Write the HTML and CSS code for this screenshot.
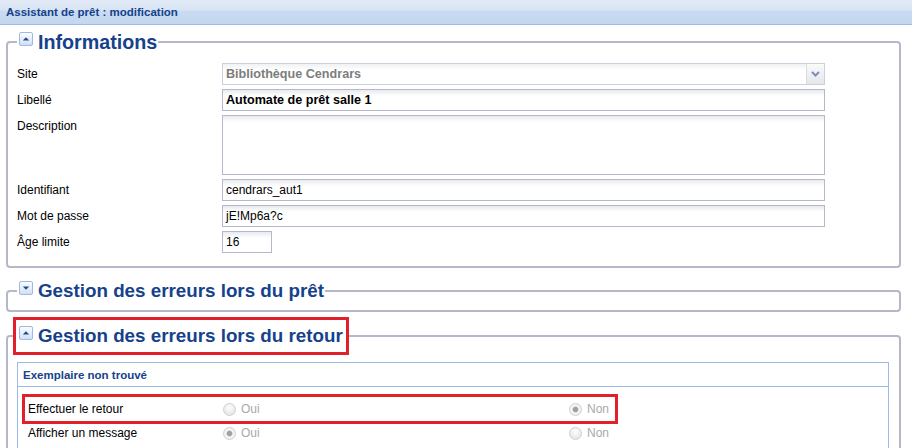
FILE: index.html
```html
<!DOCTYPE html>
<html lang="fr">
<head>
<meta charset="utf-8">
<title>Assistant de prêt : modification</title>
<link rel="stylesheet" href="styles.css">
</head>
<body>
<div class="win-header">Assistant de prêt : modification</div>

<fieldset class="fs fs-info">
  <legend class="fs-legend"><span class="tool"><svg viewBox="0 0 12 12"><path d="M2.8 7.4 6 4.2 9.2 7.4Z"/></svg></span><span class="fs-title">Informations</span></legend>
  <div class="form-row">
    <div class="form-label">Site</div>
    <div class="field combo"><span class="combo-text">Bibliothèque Cendrars</span><span class="combo-trigger"><svg viewBox="0 0 9 6"><polyline points="1,1 4.5,4.5 8,1" fill="none" stroke="#7d8dbd" stroke-width="2"/></svg></span></div>
  </div>
  <div class="form-row">
    <div class="form-label">Libellé</div>
    <div class="field field-bold">Automate de prêt salle 1</div>
  </div>
  <div class="form-row">
    <div class="form-label">Description</div>
    <div class="field field-area"></div>
  </div>
  <div class="form-row">
    <div class="form-label">Identifiant</div>
    <div class="field">cendrars_aut1</div>
  </div>
  <div class="form-row">
    <div class="form-label">Mot de passe</div>
    <div class="field">jE!Mp6a?c</div>
  </div>
  <div class="form-row">
    <div class="form-label">Âge limite</div>
    <div class="field field-short">16</div>
  </div>
</fieldset>

<fieldset class="fs fs-pret">
  <legend class="fs-legend"><span class="tool"><svg viewBox="0 0 12 12"><path d="M2.8 4.6 6 7.8 9.2 4.6Z"/></svg></span><span class="fs-title">Gestion des erreurs lors du prêt</span></legend>
</fieldset>

<fieldset class="fs fs-retour">
  <legend class="fs-legend hl"><span class="tool"><svg viewBox="0 0 12 12"><path d="M2.8 7.4 6 4.2 9.2 7.4Z"/></svg></span><span class="fs-title">Gestion des erreurs lors du retour</span></legend>
  <div class="panel">
    <div class="panel-header">Exemplaire non trouvé</div>
    <div class="panel-body">
      <div class="radio-row hl">
        <div class="radio-label">Effectuer le retour</div>
        <label class="radio-opt opt-first"><input class="radio" type="radio" name="r1" disabled>Oui</label>
        <label class="radio-opt"><input class="radio" type="radio" name="r1" checked disabled>Non</label>
      </div>
      <div class="radio-row">
        <div class="radio-label">Afficher un message</div>
        <label class="radio-opt opt-first"><input class="radio" type="radio" name="r2" checked disabled>Oui</label>
        <label class="radio-opt"><input class="radio" type="radio" name="r2" disabled>Non</label>
      </div>
    </div>
  </div>
</fieldset>
</body>
</html>
```

FILE: styles.css
```css
* { box-sizing: border-box; }

html, body { margin: 0; padding: 0; }

body {
  width: 912px;
  height: 448px;
  overflow: hidden;
  background: #fff;
  font-family: "Liberation Sans", Arial, sans-serif;
  font-size: 12px;
  color: #000;
}

.win-header {
  height: 25px;
  padding: 1px 0 0 6px;
  border-bottom: 1px solid #99bbe8;
  background: linear-gradient(#e2eaf6 0%, #d9e5f4 42%, #c9dbf1 46%, #c3d7f0 100%);
  font-weight: bold;
  font-size: 11.5px;
  line-height: 23px;
  color: #15428b;
  white-space: nowrap;
}

/* fieldsets */
.fs {
  margin: 0 11px 0 6px;
  border: 2px solid #b5b8c8;
  border-radius: 4px;
  min-width: 0;
}
.fs-info { margin-top: 6px; padding: 10px 10px 13px 9px; }
.fs-pret { margin-top: 12px; padding: 0 10px 8px 9px; }
.fs-retour { margin-top: 5px; padding: 7px 10px 14px 9px; }

.fs-legend {
  padding: 0 1px 0 2px;
  height: 22px;
  line-height: 22px;
  font-size: 12px;
  white-space: nowrap;
}
.fs-legend.hl {
  height: 38px;
  border: 3px solid #e2202a;
  padding: 5px 3px;
  margin-left: -4px;
}

.tool {
  display: inline-block;
  vertical-align: top;
  width: 14px;
  height: 14px;
  margin: 1px 5px 0 0;
  border: 1px solid #9fb9e0;
  border-radius: 2px;
  background: linear-gradient(#fbfdff, #d2e0f3);
}
.tool svg {
  display: block;
  width: 12px;
  height: 12px;
  fill: #1e4b99;
}
.fs-title {
  vertical-align: top;
  font-weight: bold;
  font-size: 18.8px;
  color: #15428b;
}
.fs-info .fs-title { font-size: 19.7px; }

/* form rows */
.form-row {
  display: flex;
  align-items: flex-start;
  margin-bottom: 4px;
}
.form-row:last-child { margin-bottom: 0; }
.form-label {
  width: 205px;
  flex: none;
  line-height: 22px;
}
.field {
  width: 603px;
  height: 22px;
  border: 1px solid #b5b8c8;
  background: linear-gradient(#e7eaee, #fff 6px);
  padding: 0 3px;
  line-height: 20px;
  white-space: nowrap;
  overflow: hidden;
}
.field-bold { font-weight: bold; font-size: 12.6px; }
.field-area { height: 60px; }
.field-short { width: 50px; }

.combo {
  display: flex;
  justify-content: space-between;
  padding-right: 0;
  border-color: #cdd0da;
  background: linear-gradient(#eff1f4, #fff 6px);
}
.combo-text {
  color: #7d7d7d;
  font-weight: bold;
  font-size: 12.6px;
}
.combo-trigger {
  width: 18px;
  flex: none;
  border-left: 1px solid #dcdde3;
  background: linear-gradient(#fafafa, #e5e6ea);
  display: flex;
  align-items: center;
  justify-content: center;
}
.combo-trigger svg { width: 9px; height: 6px; display: block; }

/* panel */
.panel { border: 1px solid #99bbe8; }
.panel-header {
  height: 24px;
  border-bottom: 1px solid #99bbe8;
  padding: 1px 0 0 5px;
  font-weight: bold;
  font-size: 11.5px;
  line-height: 22px;
  color: #15428b;
  background: #fff;
}
.panel-body { padding: 10px 7px 10px; }

.radio-row {
  display: flex;
  align-items: center;
  width: 590px;
  height: 24px;
  padding-left: 3px;
}
.radio-row.hl { outline: 3px solid #e2202a; }
.radio-label { width: 195px; flex: none; }
.radio-opt {
  display: flex;
  align-items: center;
  color: #a9a9a9;
}
.opt-first { width: 346px; flex: none; }

.radio {
  -webkit-appearance: none;
  appearance: none;
  margin: 0 5px 0 0;
  width: 13px;
  height: 13px;
  flex: none;
  border: 1px solid #d0d0d0;
  border-radius: 50%;
  background: radial-gradient(circle at 50% 35%, #fdfdfd, #e7e7e7 75%);
}
.radio:checked {
  background: radial-gradient(circle, #a0a0a0 0 2.2px, #d8d8d8 2.9px, #f6f6f6 3.7px, #e6e6e6 100%);
}
```
